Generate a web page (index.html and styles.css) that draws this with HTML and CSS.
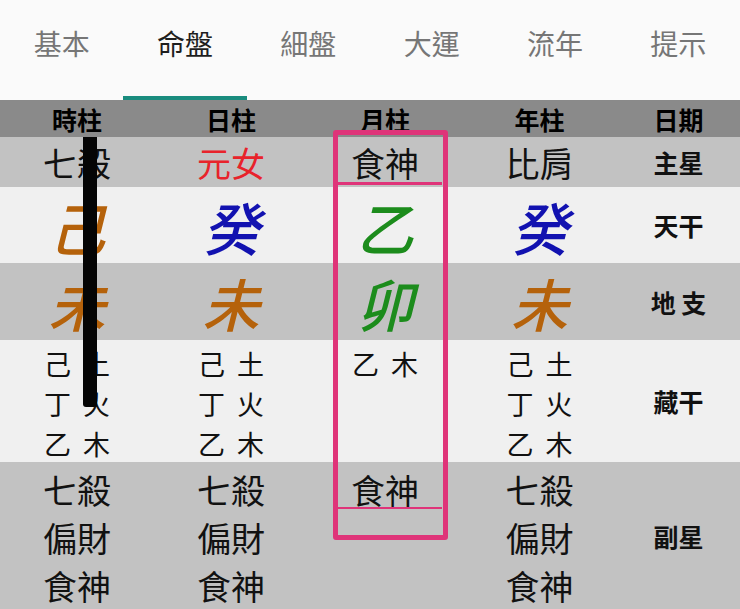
FILE: index.html
```html
<!DOCTYPE html>
<html lang="zh-Hant">
<head>
<meta charset="utf-8">
<title>命盤</title>
<link rel="stylesheet" href="styles.css">
</head>
<body>
<div class="page">
  <nav class="tabs">
    <div class="tab">基本</div>
    <div class="tab active">命盤</div>
    <div class="tab">細盤</div>
    <div class="tab">大運</div>
    <div class="tab">流年</div>
    <div class="tab">提示</div>
  </nav>

  <div class="chart">
    <div class="row head">
      <div class="cell">時柱</div>
      <div class="cell">日柱</div>
      <div class="cell">月柱</div>
      <div class="cell">年柱</div>
      <div class="cell">日期</div>
    </div>

    <div class="row star dark">
      <div class="cell">七殺</div>
      <div class="cell red">元女</div>
      <div class="cell">食神</div>
      <div class="cell">比肩</div>
      <div class="cell label">主星</div>
    </div>

    <div class="row big light">
      <div class="cell earth">己</div>
      <div class="cell water">癸</div>
      <div class="cell wood">乙</div>
      <div class="cell water">癸</div>
      <div class="cell label">天干</div>
    </div>

    <div class="row big dark branch">
      <div class="cell earth">未</div>
      <div class="cell earth">未</div>
      <div class="cell wood">卯</div>
      <div class="cell earth">未</div>
      <div class="cell label">地 支</div>
    </div>

    <div class="row hidden light">
      <div class="cell stack"><span>己 土</span><span>丁 火</span><span>乙 木</span></div>
      <div class="cell stack"><span>己 土</span><span>丁 火</span><span>乙 木</span></div>
      <div class="cell stack"><span>乙 木</span></div>
      <div class="cell stack"><span>己 土</span><span>丁 火</span><span>乙 木</span></div>
      <div class="cell label">藏干</div>
    </div>

    <div class="row sub dark">
      <div class="cell stack"><span>七殺</span><span>偏財</span><span>食神</span></div>
      <div class="cell stack"><span>七殺</span><span>偏財</span><span>食神</span></div>
      <div class="cell stack"><span>食神</span></div>
      <div class="cell stack"><span>七殺</span><span>偏財</span><span>食神</span></div>
      <div class="cell label">副星</div>
    </div>
  </div>

  <div class="mark-box"></div>
  <div class="mark-line top-line"></div>
  <div class="mark-line bottom-line"></div>
  <div class="mark-bar"></div>
</div>
</body>
</html>
```

FILE: styles.css
```css
* { box-sizing: border-box; }

html, body {
  margin: 0;
  padding: 0;
  background: #c2c2c2;
}

body {
  font-family: "Noto Sans CJK TC", "Noto Sans", sans-serif;
  color: #111;
  width: 740px;
  height: 609px;
  overflow: hidden;
}

.page {
  position: relative;
  width: 740px;
  height: 609px;
  border-left: 1px solid #9a9a9a;
}

.tabs {
  display: flex;
  height: 100px;
  background: #fafafa;
  margin-left: -1px;
}

.tab {
  flex: 1 1 0;
  display: flex;
  justify-content: center;
  align-items: flex-start;
  padding-top: 23px;
  font-size: 28px;
  line-height: 40px;
  color: #767676;
  border-bottom: 4px solid transparent;
}

.tab.active {
  color: #1e1e1e;
  border-bottom-color: #1a8c7e;
}

.chart {
  margin-left: -1px;
}

.row {
  display: grid;
  grid-template-columns: 154px 154px 154px 155px 1fr;
  grid-template-rows: 100%;
  overflow: visible;
}

.cell {
  display: flex;
  justify-content: center;
  align-items: center;
  line-height: 1.2;
  min-height: 0;
}

.dark { background: #c2c2c2; }
.light { background: #f0f0f0; }

.head {
  height: 37px;
  background: #8a8a8a;
  font-weight: 700;
  font-size: 25px;
  color: #000;
}

.star {
  height: 50px;
  font-size: 34px;
}

.star .cell:not(.label) { padding-top: 2px; }

.red { color: #e8232b; }

.big {
  height: 76px;
  font-size: 57px;
}

.branch { height: 77px; }

.big .cell:not(.label) {
  font-style: italic;
  font-weight: 500;
  padding-top: 2px;
  line-height: 1;
}

.earth { color: #b5620b; }
.water { color: #1212b0; }
.wood { color: #1c8c1c; }

.label {
  font-size: 25px;
  font-weight: 700;
  font-style: normal;
  color: #111;
}

.hidden {
  height: 122px;
  font-size: 27px;
}

.sub {
  height: 147px;
  font-size: 34px;
}

.stack {
  flex-direction: column;
  justify-content: flex-start;
}

.hidden .stack {
  padding-top: 4px;
  line-height: 40px;
  word-spacing: 6px;
}

.hidden .stack span { white-space: pre; }

.sub .stack {
  padding-top: 4px;
  line-height: 48px;
}

/* annotation overlays */
.mark-box {
  position: absolute;
  left: 332px;
  top: 130px;
  width: 115px;
  height: 410px;
  border: 5px solid #df3479;
  border-radius: 3px;
}

.mark-line {
  position: absolute;
  left: 337px;
  width: 104px;
  background: #df3479;
}

.top-line { top: 182px; height: 3px; }
.bottom-line { top: 507px; height: 2px; }

.mark-bar {
  position: absolute;
  left: 82px;
  top: 137px;
  width: 14px;
  height: 270px;
  background: #050505;
  border-radius: 0 0 3px 3px;
}
```
